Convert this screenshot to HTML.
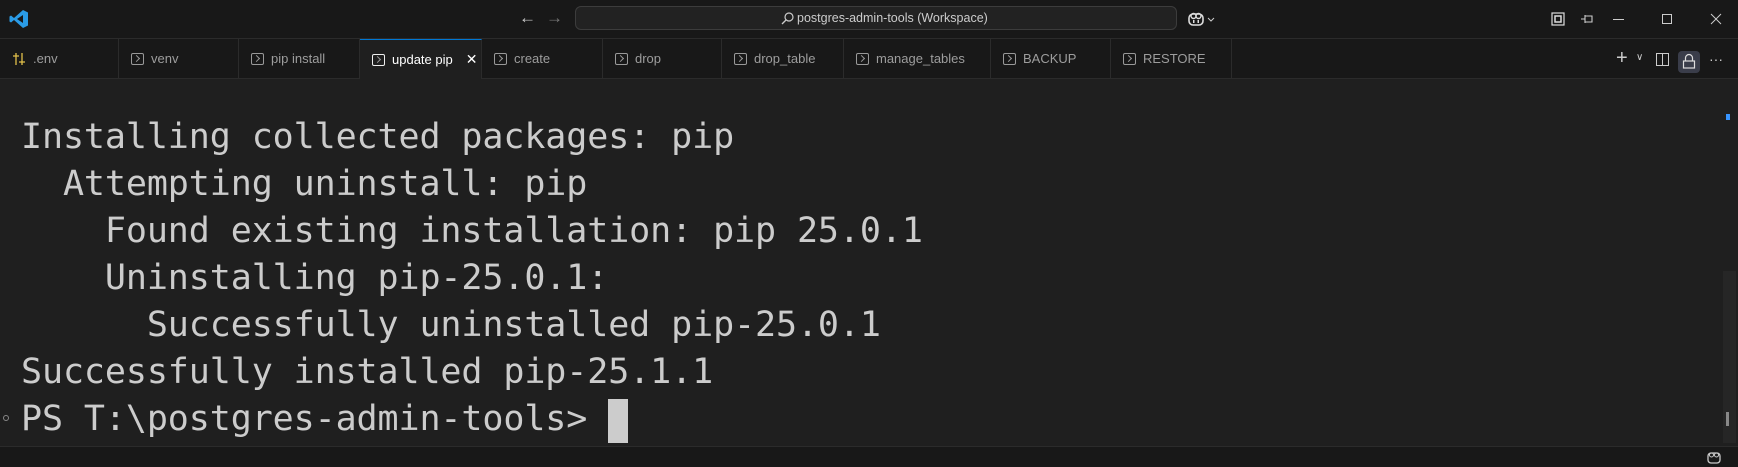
<!DOCTYPE html>
<html><head><meta charset="utf-8"><style>
*{margin:0;padding:0;box-sizing:border-box}
body{width:1738px;height:467px;background:#1f1f1f;overflow:hidden;position:relative;font-family:"Liberation Sans",sans-serif;color:#ccc}
#title{position:absolute;left:0;top:0;width:1738px;height:39px;background:#181818;border-bottom:1px solid #2b2b2b}
#tabs{position:absolute;left:0;top:39px;width:1738px;height:40px;background:#181818;border-bottom:1px solid #2b2b2b;display:flex}
.tab{height:39px;border-right:1px solid #2b2b2b;display:flex;align-items:center;padding-left:12px;font-size:13px;color:#9d9d9d;gap:7px}
.tab.act{background:#1f1f1f;color:#fff;border-top:1px solid #0078d4;height:40px}
.ti{width:13px;height:12px;border:1px solid #999;border-radius:2px;position:relative}
.ti:after{content:"";position:absolute;left:2px;top:2px;width:4px;height:4px;border-right:1px solid #999;border-bottom:1px solid #999;transform:rotate(-45deg)}
#term{position:absolute;left:21px;top:114px;font-family:"DejaVu Sans Mono","Liberation Mono",monospace;font-size:35px;line-height:47px;color:#cccccc;white-space:pre;letter-spacing:-0.1px}
#status{position:absolute;left:0;top:446px;width:1738px;height:21px;background:#181818;border-top:1px solid #2b2b2b}
.ic{position:absolute;color:#ccc;font-size:16px}
</style></head><body>
<div id="title">
 <svg style="position:absolute;left:9px;top:9px" width="20" height="20" viewBox="0 0 20 20"><path d="M14 1 L19 3.5 V16.5 L14 19 L5 11 L2 13.5 L0.5 12.5 V7.5 L2 6.5 L5 9 Z M14 6 L8 10 L14 14 Z" fill="#2a9be6" fill-rule="evenodd"/></svg>
 <div class="ic" style="left:519px;top:8px;font-size:17px">←</div>
 <div class="ic" style="left:546px;top:8px;font-size:17px;color:#777">→</div>
 <div style="position:absolute;left:575px;top:6px;width:602px;height:24px;border:1px solid #3c3c3c;border-radius:6px;background:#222"></div>
 <svg style="position:absolute;left:781px;top:12px" width="13" height="13" viewBox="0 0 13 13"><circle cx="8" cy="5" r="4" fill="none" stroke="#ccc" stroke-width="1.2"/><path d="M5 8 L1 12" stroke="#ccc" stroke-width="1.3"/></svg>
 <div style="position:absolute;left:797px;top:11px;font-size:12.5px;color:#ccc">postgres-admin-tools (Workspace)</div>
 <svg style="position:absolute;left:1188px;top:11px" width="30" height="16" viewBox="0 0 30 16"><rect x="1" y="3" width="14" height="11" rx="4" fill="none" stroke="#ddd" stroke-width="1.6"/><circle cx="5.5" cy="5" r="2.5" fill="none" stroke="#ddd" stroke-width="1.4"/><circle cx="10.5" cy="5" r="2.5" fill="none" stroke="#ddd" stroke-width="1.4"/><rect x="5" y="9" width="1.5" height="3" fill="#ddd"/><rect x="9.5" y="9" width="1.5" height="3" fill="#ddd"/><path d="M20 7 L23 10 L26 7" fill="none" stroke="#ccc" stroke-width="1"/></svg>
 <svg style="position:absolute;left:1551px;top:12px" width="14" height="14"><rect x="1" y="1" width="12" height="12" fill="none" stroke="#ddd" stroke-width="1.2"/><rect x="4" y="4" width="6" height="6" fill="none" stroke="#ddd" stroke-width="1.5"/></svg>
 <svg style="position:absolute;left:1580px;top:13px" width="14" height="12"><path d="M1 6 H5 M5 2 V10 M5 3 H12 V9 H5" fill="none" stroke="#ccc" stroke-width="1.1"/></svg>
 <div style="position:absolute;left:1613px;top:19px;width:11px;height:1px;background:#ccc"></div>
 <div style="position:absolute;left:1662px;top:14px;width:10px;height:10px;border:1px solid #ccc"></div>
 <svg style="position:absolute;left:1710px;top:13px" width="12" height="12"><path d="M1 1 L11 11 M11 1 L1 11" stroke="#ccc" stroke-width="1"/></svg>
</div>
<div id="tabs">
 <div class="tab" style="width:119px"><svg width="14" height="14" viewBox="0 0 14 14"><path d="M4 1 V13 M10 1 V13 M1 4 H7 M7 10 H13" stroke="#e2c04a" stroke-width="1.3" fill="none"/></svg>.env</div>
 <div class="tab" style="width:120px"><span class="ti"></span>venv</div>
 <div class="tab" style="width:121px"><span class="ti"></span>pip install</div>
 <div class="tab act" style="width:122px"><span class="ti" style="border-color:#eee"></span>update pip<span style="margin-left:6px;font-size:14px">✕</span></div>
 <div class="tab" style="width:121px"><span class="ti"></span>create</div>
 <div class="tab" style="width:119px"><span class="ti"></span>drop</div>
 <div class="tab" style="width:122px"><span class="ti"></span>drop_table</div>
 <div class="tab" style="width:147px"><span class="ti"></span>manage_tables</div>
 <div class="tab" style="width:120px"><span class="ti"></span>BACKUP</div>
 <div class="tab" style="width:121px"><span class="ti"></span>RESTORE</div>
</div>
<div class="ic" style="left:1616px;top:47px;font-size:20px">+</div>
<div class="ic" style="left:1636px;top:52px;font-size:10px">∨</div>
<div style="position:absolute;left:1656px;top:53px;width:13px;height:13px;border:1.3px solid #ccc"></div>
<div style="position:absolute;left:1662px;top:53px;width:1px;height:13px;background:#ccc"></div>
<div style="position:absolute;left:1678px;top:51px;width:22px;height:22px;background:#3a3d4a;border-radius:4px"></div>
<svg style="position:absolute;left:1682px;top:53px" width="14" height="17"><path d="M3.5 8 V5 A3.5 3.5 0 0 1 10.5 5 V8" fill="none" stroke="#ddd" stroke-width="1.2"/><rect x="1.5" y="8" width="11" height="7" fill="none" stroke="#ddd" stroke-width="1.2"/></svg>
<div class="ic" style="left:1709px;top:51px;font-size:14px">···</div>
<div id="term">Installing collected packages: pip
  Attempting uninstall: pip
    Found existing installation: pip 25.0.1
    Uninstalling pip-25.0.1:
      Successfully uninstalled pip-25.0.1
Successfully installed pip-25.1.1
PS T:\postgres-admin-tools&gt; </div>
<div style="position:absolute;left:608px;top:399px;width:20px;height:44px;background:#ccc"></div>
<div style="position:absolute;left:3px;top:415px;width:6px;height:6px;border:1px solid #888;border-radius:50%"></div>
<div style="position:absolute;left:1726px;top:114px;width:4px;height:6px;background:#3794ff"></div>
<div style="position:absolute;left:1723px;top:271px;width:13px;height:172px;background:#262626"></div>
<div style="position:absolute;left:1726px;top:412px;width:3px;height:14px;background:#888"></div>
<div id="status">
 <svg style="position:absolute;left:1707px;top:4px" width="14" height="13"><rect x="1" y="2" width="12" height="10" rx="3" fill="none" stroke="#ccc" stroke-width="1.3"/><circle cx="4.5" cy="4" r="2" fill="none" stroke="#ccc"/><circle cx="9.5" cy="4" r="2" fill="none" stroke="#ccc"/></svg>
</div>
</body></html>
